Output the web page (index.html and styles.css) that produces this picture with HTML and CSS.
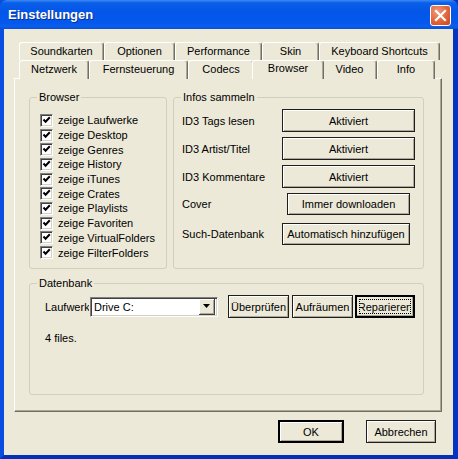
FILE: index.html
```html
<!DOCTYPE html>
<html lang="de">
<head>
    <meta charset="UTF-8">
    <title>Einstellungen</title>
    <link rel="stylesheet" href="styles.css">
</head>
<body>
    <div class="window">
        <!-- Title bar -->
        <div class="titlebar">
            <span class="title">Einstellungen</span>
            <div class="close-btn">
                <svg width="13" height="13" viewBox="0 0 13 13">
                    <path d="M2 2 L11 11 M11 2 L2 11" stroke="#fff" stroke-width="2.2" stroke-linecap="square"/>
                </svg>
            </div>
        </div>

        <div class="client">
            <!-- Tabs -->
            <div class="tabs">
                <div class="tab-row back">
                    <div class="tab" style="width:85px">Soundkarten</div>
                    <div class="tab" style="width:71px">Optionen</div>
                    <div class="tab" style="width:87px">Performance</div>
                    <div class="tab" style="width:57px">Skin</div>
                    <div class="tab" style="width:121px">Keyboard Shortcuts</div>
                </div>
                <div class="tab-row front">
                    <div class="tab" style="width:70px">Netzwerk</div>
                    <div class="tab" style="width:99px">Fernsteuerung</div>
                    <div class="tab" style="width:66px">Codecs</div>
                    <div class="tab active" style="width:72px">Browser</div>
                    <div class="tab" style="width:55px">Video</div>
                    <div class="tab" style="width:58px">Info</div>
                </div>
            </div>

            <div class="panel">
                <div class="group-row">
                    <!-- Browser options -->
                    <div class="group browser-group">
                        <span class="group-label">Browser</span>
                        <div class="check-row"><span class="checkbox"></span>zeige Laufwerke</div>
                        <div class="check-row"><span class="checkbox"></span>zeige Desktop</div>
                        <div class="check-row"><span class="checkbox"></span>zeige Genres</div>
                        <div class="check-row"><span class="checkbox"></span>zeige History</div>
                        <div class="check-row"><span class="checkbox"></span>zeige iTunes</div>
                        <div class="check-row"><span class="checkbox"></span>zeige Crates</div>
                        <div class="check-row"><span class="checkbox"></span>zeige Playlists</div>
                        <div class="check-row"><span class="checkbox"></span>zeige Favoriten</div>
                        <div class="check-row"><span class="checkbox"></span>zeige VirtualFolders</div>
                        <div class="check-row"><span class="checkbox"></span>zeige FilterFolders</div>
                    </div>

                    <!-- Infos sammeln -->
                    <div class="group infos-group">
                        <span class="group-label">Infos sammeln</span>
                        <div class="info-row">
                            <span class="info-label">ID3 Tags lesen</span>
                            <div class="btn wide">Aktiviert</div>
                        </div>
                        <div class="info-row">
                            <span class="info-label">ID3 Artist/Titel</span>
                            <div class="btn wide">Aktiviert</div>
                        </div>
                        <div class="info-row">
                            <span class="info-label">ID3 Kommentare</span>
                            <div class="btn wide">Aktiviert</div>
                        </div>
                        <div class="info-row cover-row">
                            <span class="info-label">Cover</span>
                            <div class="btn cover-btn">Immer downloaden</div>
                        </div>
                        <div class="info-row search-row">
                            <span class="info-label">Such-Datenbank</span>
                            <div class="btn search-btn">Automatisch hinzufügen</div>
                        </div>
                    </div>
                </div>

                <!-- Datenbank -->
                <div class="group db-group">
                    <span class="group-label">Datenbank</span>
                    <div class="db-row">
                        <span class="drive-label">Laufwerk</span>
                        <div class="combo">
                            <span class="combo-text">Drive C:</span>
                            <span class="combo-arrow">
                                <svg width="7" height="4" viewBox="0 0 7 4"><path d="M0 0 H7 L3.5 4 Z" fill="#000"/></svg>
                            </span>
                        </div>
                        <div class="btn db-btn check-btn">Überprüfen</div>
                        <div class="btn db-btn">Aufräumen</div>
                        <div class="btn db-btn focused"><span class="focus-ring">Reparieren</span></div>
                    </div>
                    <div class="db-status">4 files.</div>
                </div>
            </div>

            <!-- Dialog buttons -->
            <div class="dialog-buttons">
                <div class="btn default ok-btn">OK</div>
                <div class="btn cancel-btn">Abbrechen</div>
            </div>
        </div>
    </div>
</body>
</html>
```

FILE: styles.css
```css
body {
    margin: 0;
    padding: 0;
    font-family: "Liberation Sans", Arial, sans-serif;
    font-size: 11px;
    color: #000;
}
.window {
    width: 458px;
    height: 459px;
    box-sizing: border-box;
    display: flex;
    flex-direction: column;
    background: #0842d6;
    border-left: 4px solid #0b4de0;
    border-right: 5px solid #0733c4;
    border-bottom: 4px solid #0531b8;
}

/* Title bar */
.titlebar {
    height: 29px;
    margin: 0 -5px 0 -4px;
    padding: 0 7px 0 8px;
    display: flex;
    align-items: center;
    justify-content: space-between;
    background: linear-gradient(#3b8cf5 0%, #0a5ee8 10%, #0356e8 40%, #0458ec 80%, #0b5fee 90%, #0a4fd8 100%);
    border-radius: 7px 7px 0 0;
}
.title {
    color: #fff;
    font-weight: bold;
    font-size: 13px;
    text-shadow: 1px 1px #0c2e8c;
    padding-bottom: 1px;
}
.close-btn {
    width: 19px;
    height: 19px;
    border: 1px solid #fff;
    border-radius: 3px;
    display: flex;
    align-items: center;
    justify-content: center;
    background: radial-gradient(circle at 35% 30%, #f09a7a, #e0643c 55%, #c8461c);
    margin-top: 1px;
}

/* Client area */
.client {
    flex: 1;
    background: #ece9d8;
    padding: 13px 0 0 10px;
}
.tabs {
    width: 428px;
}
.tab-row {
    display: flex;
    align-items: flex-end;
    padding-left: 5px;
    height: 18px;
}
.tab {
    box-sizing: border-box;
    height: 18px;
    line-height: 16px;
    text-align: center;
    white-space: nowrap;
    background: #ece9d8;
    border-top: 1px solid #fff;
    border-left: 1px solid #fff;
    border-right: 1px solid #716f64;
    box-shadow: inset -1px 0 #aca899;
    border-radius: 3px 3px 0 0;
}
.tab-row.front .tab {
    height: 19px;
    margin-bottom: -1px;
}
.tab.active {
    position: relative;
    z-index: 1;
    height: 21px;
    margin: 0 -2px -1px;
    line-height: 15px;
}
.panel {
    box-sizing: border-box;
    width: 428px;
    height: 334px;
    background: #ece9d8;
    border-top: 1px solid #fff;
    border-left: 1px solid #fff;
    border-right: 1px solid #716f64;
    border-bottom: 1px solid #716f64;
    box-shadow: inset -1px -1px #aca899;
    padding: 18px 0 0 14px;
}

/* Group boxes */
.group-row {
    display: flex;
    gap: 6px;
    height: 172px;
}
.group {
    position: relative;
    box-sizing: border-box;
    border: 1px solid #d0d0bf;
    border-radius: 3px;
}
.group-label {
    position: absolute;
    top: -7px;
    left: 7px;
    padding: 0 2px;
    line-height: 13px;
    background: #ece9d8;
}
.browser-group {
    width: 138px;
    padding: 15px 0 0 10px;
}
.check-row {
    display: flex;
    align-items: center;
    height: 14.7px;
    white-space: nowrap;
}
.checkbox {
    box-sizing: border-box;
    width: 13px;
    height: 13px;
    margin-right: 5px;
    background: #fff url("data:image/svg+xml,%3Csvg xmlns='http://www.w3.org/2000/svg' width='9' height='9'%3E%3Cpath d='M1.5 3.5 L3.6 5.8 L7.8 1.3' fill='none' stroke='%23000' stroke-width='2'/%3E%3C/svg%3E") 1px 1px no-repeat;
    border-top: 1px solid #808080;
    border-left: 1px solid #808080;
    border-right: 1px solid #fff;
    border-bottom: 1px solid #fff;
    box-shadow: inset 1px 1px #404040, inset -1px -1px #d4d0c8;
}
.infos-group {
    width: 251px;
    padding: 11px 0 0 8px;
}
.info-row {
    display: flex;
    align-items: center;
    margin-bottom: 5px;
}
.info-label {
    width: 100px;
    white-space: nowrap;
}
.cover-row {
    margin-top: 5px;
}
.search-row {
    margin-top: 8px;
}

/* Buttons */
.btn {
    box-sizing: border-box;
    height: 23px;
    display: flex;
    align-items: center;
    justify-content: center;
    white-space: nowrap;
    overflow: hidden;
    background: #ece9d8;
    border: 1px solid #1e1e1e;
    box-shadow: inset 1px 1px #fff, inset -1px -1px #aca899;
}
.btn.wide {
    width: 133px;
}
.cover-btn {
    width: 123px;
    margin-left: 5px;
    height: 22px;
}
.search-btn {
    width: 128px;
    height: 22px;
}

/* Datenbank */
.db-group {
    width: 395px;
    height: 112px;
    margin-top: 14px;
    padding: 11px 0 0 15px;
}
.db-row {
    display: flex;
    align-items: center;
}
.drive-label {
    width: 44px;
    margin-right: 1px;
    overflow: hidden;
    white-space: nowrap;
}
.combo {
    box-sizing: border-box;
    width: 128px;
    height: 20px;
    display: flex;
    align-items: center;
    background: #fff;
    border-top: 1px solid #808080;
    border-left: 1px solid #808080;
    border-right: 1px solid #fff;
    border-bottom: 1px solid #fff;
    box-shadow: inset 1px 1px #404040, inset -1px -1px #d4d0c8;
    padding: 0 2px 0 3px;
    margin-right: 10px;
}
.combo-text {
    flex: 1;
}
.combo-arrow {
    box-sizing: border-box;
    width: 16px;
    height: 16px;
    display: flex;
    align-items: center;
    justify-content: center;
    background: #ece9d8;
    border-right: 1px solid #404040;
    border-bottom: 1px solid #404040;
    box-shadow: inset 1px 1px #fff, inset -1px -1px #aca899;
}
.db-btn {
    width: 61px;
    margin-right: 2px;
}
.db-btn.check-btn {
    margin-right: 3px;
}
.btn.focused {
    width: 60px;
    border: 2px solid #000;
    box-shadow: inset -1px -1px #aca899;
    padding: 2px;
}
.focus-ring {
    flex: 1;
    align-self: stretch;
    display: flex;
    align-items: center;
    justify-content: center;
    border: 1px dotted #000;
    overflow: hidden;
    white-space: nowrap;
}
.db-status {
    margin-top: 14px;
    line-height: 13px;
}

/* Dialog buttons */
.dialog-buttons {
    display: flex;
    margin: 8px 0 0 264px;
    gap: 22px;
}
.ok-btn {
    width: 66px;
}
.btn.default {
    border: 2px solid #000;
    box-shadow: inset 1px 1px #fff, inset -1px -1px #aca899;
}
.cancel-btn {
    width: 70px;
}
```
